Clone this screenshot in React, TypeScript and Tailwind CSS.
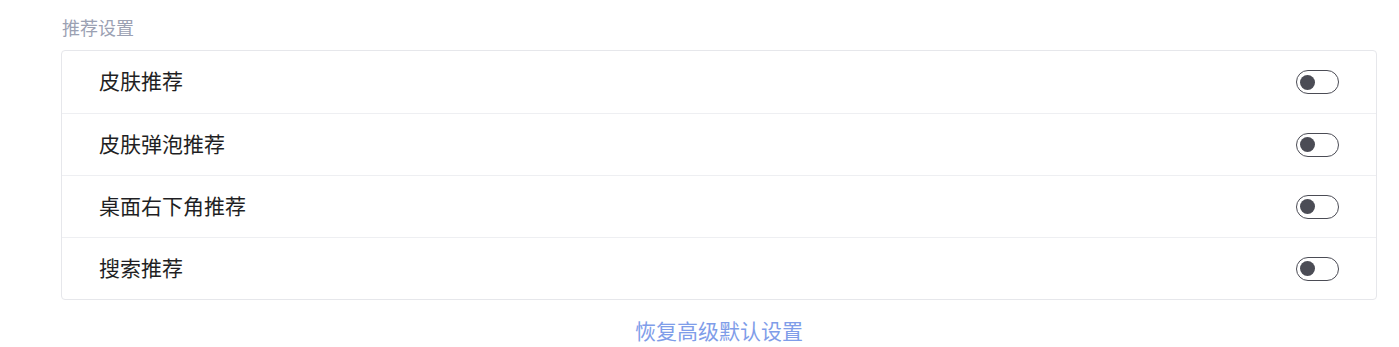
const items = ["皮肤推荐", "皮肤弹泡推荐", "桌面右下角推荐", "搜索推荐"];

function Toggle() {
  return (
    <span className="flex h-[24px] w-[43px] items-center rounded-full border-[1.5px] border-[#4b4c55] bg-white px-[3px]">
      <span className="h-[15px] w-[15px] rounded-full bg-[#4b4c55]" />
    </span>
  );
}

export default function App() {
  return (
    <div
      className="min-h-[347px] bg-white pl-[61px] pr-[22px] pt-[15px]"
      style={{ fontFamily: '"Noto Sans CJK SC", "Noto Sans", sans-serif' }}
    >
      <div className="pl-[1px] text-[18px] leading-[24px] text-[#9ba1b3]">推荐设置</div>
      <div className="mt-[11px] rounded-[4px] border border-[#e6e7eb]">
        {items.map((label, i) => (
          <div
            key={label}
            className={`flex h-[62px] items-center justify-between pl-[37px] pr-[37px] ${
              i > 0 ? "border-t border-[#eeeff2]" : ""
            }`}
          >
            <span className="mb-[4px] text-[21px] leading-[28px] text-[#1f1f24]">{label}</span>
            <Toggle />
          </div>
        ))}
      </div>
      <div className="mt-[14px] text-center text-[21px] leading-[32px] text-[#7f9de9]">恢复高级默认设置</div>
    </div>
  );
}
